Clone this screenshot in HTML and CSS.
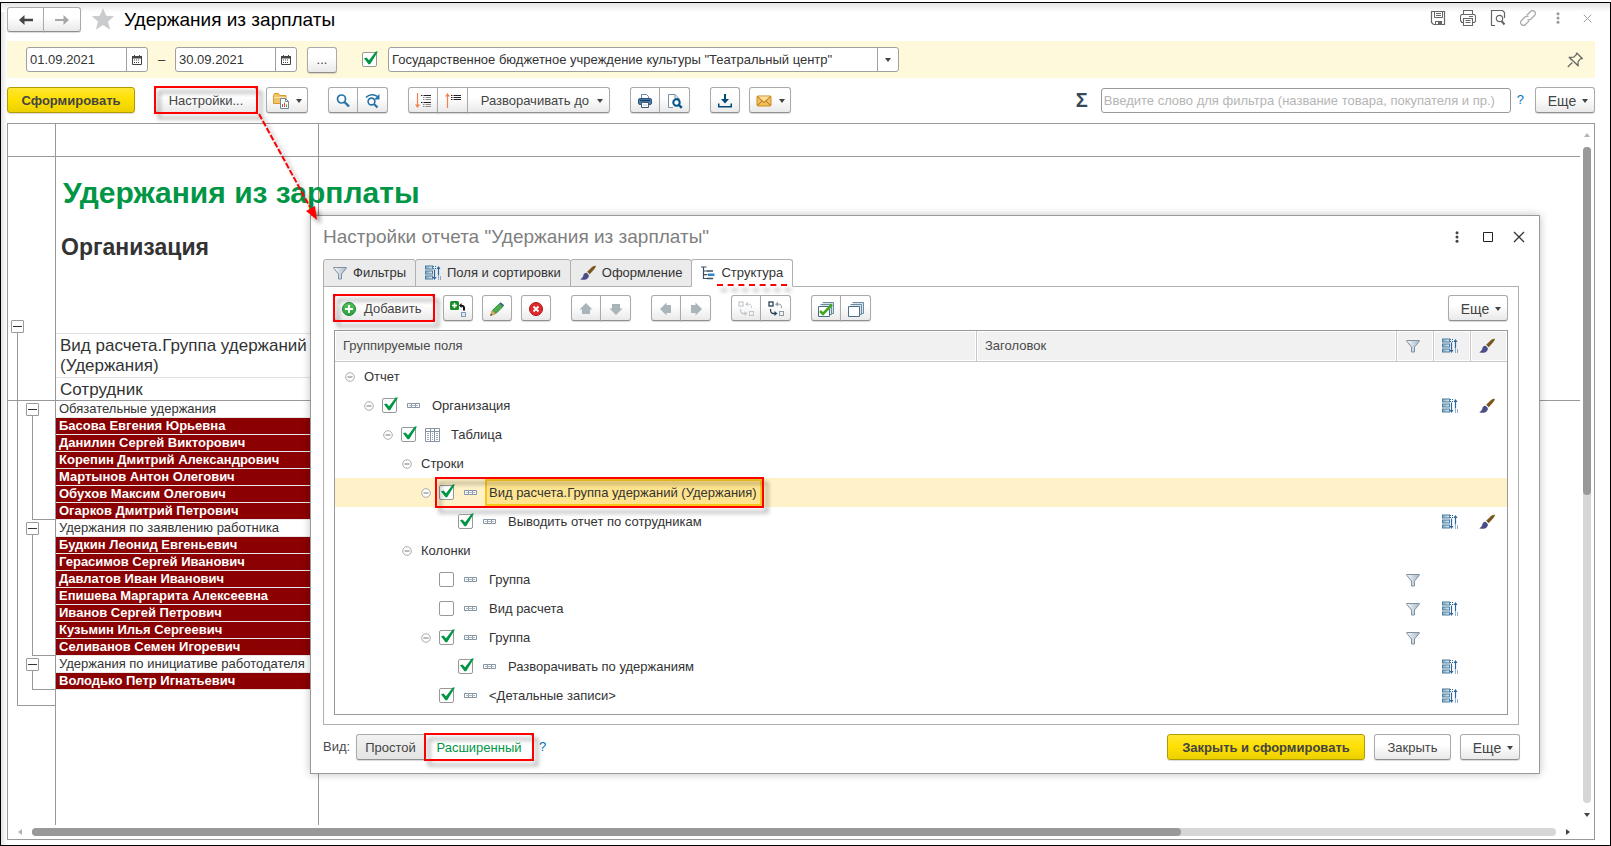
FILE: index.html
```html
<!DOCTYPE html>
<html lang="ru">
<head>
<meta charset="utf-8">
<title>Удержания из зарплаты</title>
<link rel="stylesheet" href="styles.css">
</head>
<body>
<svg class="sprite" aria-hidden="true">
  <defs>
    <linearGradient id="g-funnel" x1="0" x2="1" y1="0" y2="0"><stop offset="0" stop-color="#f4f7fa"/><stop offset="1" stop-color="#a9b9c8"/></linearGradient>
    <linearGradient id="g-bar" x1="0" x2="1" y1="0" y2="0"><stop offset="0" stop-color="#7fa9c4"/><stop offset="1" stop-color="#e2eef6"/></linearGradient>
    <linearGradient id="g-green" x1="0" x2="0" y1="0" y2="1"><stop offset="0" stop-color="#5cc35c"/><stop offset="1" stop-color="#27a33a"/></linearGradient>
    <symbol id="back" viewBox="0 0 16 16"><path d="M1 8l5.500-5v3.800H15v2.400H6.500V13z" fill="#444"/></symbol>
    <symbol id="fwd" viewBox="0 0 16 16"><path d="M15 8L9.500 3v4H1v2h8.500v4z" fill="#a8a8a8"/></symbol>
    <symbol id="star" viewBox="0 0 24 24"><path d="M12 1l3.200 7.800 8 .5-6.200 5.200 2.200 8.200L12 18l-7.200 4.700L7 14.500.8 9.300l8-.5z" fill="#c9cbce"/></symbol>
    <symbol id="cal" viewBox="0 0 10 10"><path d="M.5 2h9v7.500h-9z" fill="#fff" stroke="#444"/><path d="M0 1h10v2.500H0zM2 0h1v2H2zM7 0h1v2H7z" fill="#444"/><path d="M2 5h6M2 7.500h6" stroke="#444" stroke-dasharray="1 1"/></symbol>
    <symbol id="caret" viewBox="0 0 6 4"><path d="M0 0h6L3 4z" fill="#444"/></symbol>
    <symbol id="folder" viewBox="0 0 16 16"><path d="M.5 2.500l1-2h4l1 2H13v8H.5z" fill="#f2c468" stroke="#d99a2c"/><path d="M1 4.500h11.500" stroke="#fbe5b4"/><path d="M7.500 5.500h5l3 3v7h-8z" fill="#fff" stroke="#6d8799"/><path d="M12.500 5.500v3h3" fill="none" stroke="#6d8799"/><path d="M9.500 14v-3M11.500 14V9.500" stroke="#e0483a"/><path d="M13.500 14v-2.500" stroke="#3aa049"/></symbol>
    <symbol id="find" viewBox="0 0 16 16"><circle cx="6.500" cy="6" r="4" fill="none" stroke="#2672a8" stroke-width="1.700"/><path d="M9.500 9l4.500 4.500" stroke="#2672a8" stroke-width="2.400"/></symbol>
    <symbol id="refind" viewBox="0 0 16 16"><circle cx="6.500" cy="8.500" r="3.400" fill="none" stroke="#2672a8" stroke-width="1.600"/><path d="M9 11l3.500 3.500" stroke="#2672a8" stroke-width="2.200"/><path d="M1 4.500C4 1 9 .8 12.500 3.500" fill="none" stroke="#2672a8" stroke-width="1.500"/><path d="M14.500 1v5.500H9z" fill="#2672a8"/></symbol>
    <symbol id="expand" viewBox="0 0 16 16"><path d="M2.500 0v13" stroke="#f0824a" stroke-width="1.200"/><path d="M0 11.500h5L2.500 15z" fill="#f0824a"/><path d="M6 2.500h1.500M6 9.500h1.500M8.500 2.500H16M8.500 9.500H16" stroke="#222"/><path d="M8 4.500h1.500M10.500 4.500H16M8 6.500h1.500M10.500 6.500H16M8 11.500h1.500M10.500 11.500H16M8 13.500h1.500M10.500 13.500H16" stroke="#8a8a8a"/></symbol>
    <symbol id="collapse" viewBox="0 0 16 16"><path d="M2.500 2v13" stroke="#f0824a" stroke-width="1.200"/><path d="M0 3.500h5L2.500 0z" fill="#f0824a"/><path d="M6 2.500h1.500M6 4.500h1.500M6 6.500h1.500M8.500 2.500H16M8.500 4.500H16M8.500 6.500H16" stroke="#222"/></symbol>
    <symbol id="print" viewBox="0 0 16 16"><path d="M4.500 6V1.500h5l2 2V6" fill="#fff" stroke="#6f8aa5"/><rect x="1.500" y="5.500" width="13" height="6" rx="1.500" fill="#4c7fae" stroke="#2b5580"/><path d="M3 7.500h10" stroke="#1f3f60" stroke-width="1.400"/><path d="M4.500 9.500h7v5h-7z" fill="#fff" stroke="#3f5c78"/><path d="M6 12h4" stroke="#b8c6d2"/></symbol>
    <symbol id="preview" viewBox="0 0 16 16"><path d="M6 14.500H1.500V1.500h6.500l4 4V7" fill="#fff" stroke="#7a8fa2"/><path d="M8 1.500v4h4" fill="none" stroke="#7a8fa2"/><circle cx="9.500" cy="9.500" r="3.200" fill="#fff" stroke="#00538a" stroke-width="2"/><path d="M12 12l2.800 2.800" stroke="#00538a" stroke-width="2.400"/></symbol>
    <symbol id="save" viewBox="0 0 16 16"><path d="M7 1h2v5h3L8 10.500 4 6h3zM1 10.500h1.500V13h11v-2.500H15v4H1z" fill="#00497a"/></symbol>
    <symbol id="mail" viewBox="0 0 16 16"><rect x="1" y="3" width="14" height="10" rx="1" fill="#f2bd5c" stroke="#c98a22"/><path d="M1.500 3.500L8 9.500l6.500-6M1.500 12.500l4.700-4.600M14.500 12.500L9.800 7.900" fill="none" stroke="#b27415"/><path d="M2.500 3.500h11L8 8.400z" fill="#fbdf9f"/></symbol>
    <symbol id="floppy" viewBox="0 0 16 16"><path d="M1.500 1.500h13v13h-11l-2-2z" fill="none" stroke="#666" stroke-width="1.200"/><path d="M4.500 1.500v6h8v-6M6 3.500h5M6 5.500h5" fill="none" stroke="#666"/><path d="M5 11h7v3.500H5z" fill="#666"/><path d="M6 12h2v2H6z" fill="#fff"/></symbol>
    <symbol id="printer-o" viewBox="0 0 16 16"><path d="M3.500 4V.5h9V4M3 12.500H1.500v-1L.5 11V6l1-1.500h13l1 1.500v5l-1 1.500H13M3.500 8.500h9v7h-9zM5.500 10.500h5M5.500 12.500h5M9 6.500h4" fill="none" stroke="#666" stroke-width="1.100"/></symbol>
    <symbol id="page-find" viewBox="0 0 16 16"><path d="M5 15.500H1.500V.5h11l2 2V8" fill="none" stroke="#666" stroke-width="1.200"/><circle cx="9.500" cy="8.500" r="3.200" fill="none" stroke="#666" stroke-width="1.200"/><path d="M11.500 11l3 3.500" stroke="#666" stroke-width="2"/></symbol>
    <symbol id="link" viewBox="0 0 16 16"><path d="M7 5l3.500-3.500a2.800 2.800 0 014 4L11 9a2.800 2.800 0 01-3.500.4M9 11l-3.500 3.500a2.800 2.800 0 01-4-4L5 7a2.800 2.800 0 013.500-.4" fill="none" stroke="#a8a8a8" stroke-width="1.200"/></symbol>
    <symbol id="dots" viewBox="0 0 4 12"><circle cx="2" cy="1.800" r="1.500"/><circle cx="2" cy="6" r="1.500"/><circle cx="2" cy="10.200" r="1.500"/></symbol>
    <symbol id="x" viewBox="0 0 12 12"><path d="M1 1l10 10M11 1L1 11" stroke="currentColor" stroke-width="1.300"/></symbol>
    <symbol id="square" viewBox="0 0 10 10"><path d="M.5.5h9v9h-9z" fill="none" stroke="#222"/></symbol>
    <symbol id="pin" viewBox="0 0 16 16"><path d="M9.500.8l5.800 5.700-1.800.3-2.300 2.500-.2 4.200-2.600-2.600M4.500 8L2.400 5.500l4.300-.4L9.300 2.600 9.500.8M2 5l9.500 9.300M5.300 10.500L.8 15" fill="none" stroke="#666" stroke-width="1.200"/></symbol>
    <symbol id="funnel" viewBox="0 0 14 14"><path d="M.7 1.500h12.600v.8L8.500 8v5H5.500V8L.7 2.300z" fill="url(#g-funnel)" stroke="#7f909f"/></symbol>
    <symbol id="fields" viewBox="0 0 16 15"><g fill="url(#g-bar)" stroke="#4d7f9f"><rect x=".5" y=".5" width="7" height="3"/><rect x=".5" y="5.500" width="7" height="3"/><rect x=".5" y="10.500" width="7" height="3"/></g><path d="M9.500 4v8" stroke="#2e67a0" stroke-width="1.200"/><path d="M7.500 11.500h4l-2 3z" fill="#2e67a0"/><path d="M8 1h3M8 3h3" stroke="#2e67a0" stroke-dasharray="1 1"/><path d="M13.500 2v8" stroke="#2e67a0" stroke-width="1.200"/><path d="M11.500 3.500h4l-2-3z" fill="#2e67a0"/><path d="M13 11.500h3M13 13.500h3" stroke="#2e67a0" stroke-dasharray="1 1"/></symbol>
    <symbol id="brush" viewBox="0 0 16 15"><path d="M15.800.2c-1.600-.3-3 .6-4.800 2.300L7.200 6.300l2.500 2.400 3.800-4.200C15 2.800 15.900 1.500 15.800.2z" fill="#7b551c"/><path d="M6.600 7.200c-1.600-.2-2.900.8-3.200 2.500-.3 1.800-1.300 3-3.200 4 3 1 6 .6 7.600-1 1.100-1.200 1.300-2.400.8-3.500z" fill="#4b4e86"/></symbol>
    <symbol id="tree" viewBox="0 0 14 14"><path d="M0 1h5.500M2.500 1v11.500h4M2.500 5h4M2.500 8.700h4" fill="none" stroke="#3d4f5c" stroke-width="1.200"/><path d="M6 5h6M6 12.500h6" stroke="#3d4f5c" stroke-width="1.400"/><path d="M7 7.500h6.500v2.500H7z" fill="#2f86c8"/></symbol>
    <symbol id="plus" viewBox="0 0 16 16"><circle cx="8" cy="8" r="6.500" fill="url(#g-green)" stroke="#178a35"/><path d="M8 4v8M4 8h8" stroke="#fff" stroke-width="2"/></symbol>
    <symbol id="addchild" viewBox="0 0 16 16"><rect x="0" y="0" width="9" height="9" rx="1.500" fill="#1c8f2c"/><path d="M4.500 2v5M2 4.500h5" stroke="#fff" stroke-width="1.600"/><path d="M9 4.500L11.500 2v1.700C14 3.700 15 5 15 7v2.500h-2V7c0-1-.5-1.300-1.500-1.300V7z" fill="#111"/><rect x="11.500" y="11.500" width="4" height="4" fill="#dce7f2" stroke="#7f9bb8"/></symbol>
    <symbol id="pencil" viewBox="0 0 16 16"><path d="M10.500 2.500l3.500 3-7 7-3.500-3.200z" fill="#46ae4c" stroke="#2c7b38" stroke-width=".8"/><path d="M10.500 2.500l1.200-1.200 3.500 3L14 5.500z" fill="#35609a"/><path d="M3 9.500L1.500 14.500l5-1.800z" fill="#e8b45e" stroke="#a3762e" stroke-width=".6"/><path d="M2 12.800l-.7 2 2.100-.8z" fill="#333"/></symbol>
    <symbol id="delete" viewBox="0 0 16 16"><circle cx="8" cy="8" r="6.500" fill="#dd2a2f" stroke="#ad1318"/><path d="M5.500 5.500l5 5M10.500 5.500l-5 5" stroke="#fff" stroke-width="1.800"/></symbol>
    <symbol id="arrow" viewBox="0 0 16 16"><path d="M8 2l6.500 6.500H12V13H4V8.500H1.500z" fill="#a9b4bb"/></symbol>
    <symbol id="swap" viewBox="0 0 16 16"><rect x="1" y="1" width="4" height="4" fill="none" stroke-width="1.300"/><path d="M8.500 3.200H11c2 0 2.500 1 2.500 4" fill="none" stroke="#8f9aa3"/><path d="M10 .8v4.800L7 3.200z" fill="#8f9aa3" stroke="none"/><path d="M2.500 8c0 3.500.8 4.500 2.500 4.500h2" fill="none" stroke-width="1.300"/><path d="M6.500 10v5l3-2.500z" stroke="none"/><rect x="11.500" y="10.500" width="4" height="4" fill="none" stroke="#8f9aa3"/></symbol>
    <symbol id="stack" viewBox="0 0 16 16"><path d="M4.500 1.500h11v11h-2M2.500 3.500h11v10h-2" fill="#d6e3ec" stroke="#6d8da3"/><path d="M.5 5.500h11v10H.5z" fill="#fff" stroke="#4b6f8b"/></symbol>
    <symbol id="stack-on" viewBox="0 0 16 16"><use href="#stack"/><path d="M2 10l3 3 9-9.500" fill="none" stroke="#43a81d" stroke-width="2.600"/></symbol>
    <symbol id="minus" viewBox="0 0 10 10"><circle cx="5" cy="5" r="4.300" fill="#fff" stroke="#a3a3a3" stroke-width=".9"/><path d="M2.500 5h5" stroke="#777"/></symbol>
    <symbol id="item" viewBox="0 0 14 6"><path d="M.5.5h4v4h-4zM4.500.5h4v4h-4zM8.500.5h4v4h-4z" fill="#fff" stroke="#8796a5"/><path d="M2 2.500h9" stroke="#a9b4bf"/></symbol>
    <symbol id="table" viewBox="0 0 16 14"><path d="M.5.500h14v13H.5zM.5 3.500h14M5.500.5v13M9.500.5v13" fill="#fff" stroke="#8694a3"/><path d="M2 5.500h2M7 5.500h1M11 5.500h2M2 7.500h2M7 7.500h1M11 7.500h2M2 9.500h2M7 9.500h1M11 9.500h2M2 11.500h2M7 11.500h1M11 11.500h2" stroke="#9aa7b4"/></symbol>
  </defs>
</svg>

<div class="window">
  <header class="titlebar">
    <div class="group">
      <button class="btn nav" aria-label="Назад"><svg class="i16"><use href="#back"/></svg></button>
      <button class="btn nav" aria-label="Вперед"><svg class="i16"><use href="#fwd"/></svg></button>
    </div>
    <svg class="star"><use href="#star"/></svg>
    <h1>Удержания из зарплаты</h1>
    <div class="window-tools">
      <svg class="i16"><use href="#floppy"/></svg>
      <svg class="i16"><use href="#printer-o"/></svg>
      <svg class="i16"><use href="#page-find"/></svg>
      <svg class="i16"><use href="#link"/></svg>
      <svg class="i16 dots"><use href="#dots"/></svg>
      <svg class="cross"><use href="#x"/></svg>
    </div>
  </header>

  <div class="filters">
    <div class="field date"><input type="text" value="01.09.2021" aria-label="Начало периода"><button aria-label="Календарь"><svg class="i10"><use href="#cal"/></svg></button></div>
    <span class="dash">–</span>
    <div class="field date"><input type="text" value="30.09.2021" aria-label="Конец периода"><button aria-label="Календарь"><svg class="i10"><use href="#cal"/></svg></button></div>
    <button class="btn icon period">...</button>
    <input type="checkbox" class="check" checked aria-label="Отбор по организации">
    <div class="field org"><input type="text" value="Государственное бюджетное учреждение культуры &quot;Театральный центр&quot;" aria-label="Организация"><button aria-label="Выбрать"><svg class="caret"><use href="#caret"/></svg></button></div>
    <svg class="i16 pin"><use href="#pin"/></svg>
  </div>

  <div class="toolbar">
    <button class="btn primary generate">Сформировать</button>
    <div class="cluster">
      <span class="mark"><button class="btn settings">Настройки...</button></span>
      <button class="btn menu" aria-label="Варианты"><svg class="i16"><use href="#folder"/></svg><svg class="caret"><use href="#caret"/></svg></button>
    </div>
    <div class="group">
      <button class="btn icon" aria-label="Найти"><svg class="i16"><use href="#find"/></svg></button>
      <button class="btn icon" aria-label="Найти далее"><svg class="i16"><use href="#refind"/></svg></button>
    </div>
    <div class="group">
      <button class="btn icon" aria-label="Развернуть"><svg class="i16"><use href="#expand"/></svg></button>
      <button class="btn icon" aria-label="Свернуть"><svg class="i16"><use href="#collapse"/></svg></button>
      <button class="btn unfold">Разворачивать до<svg class="caret"><use href="#caret"/></svg></button>
    </div>
    <div class="group">
      <button class="btn icon" aria-label="Печать"><svg class="i16"><use href="#print"/></svg></button>
      <button class="btn icon" aria-label="Просмотр"><svg class="i16"><use href="#preview"/></svg></button>
    </div>
    <div class="cluster">
      <button class="btn icon" aria-label="Сохранить"><svg class="i16"><use href="#save"/></svg></button>
      <button class="btn menu" aria-label="Отправить"><svg class="i16"><use href="#mail"/></svg><svg class="caret"><use href="#caret"/></svg></button>
    </div>
    <div class="search">
      <span class="sigma">Σ</span>
      <input type="text" class="filter-text" placeholder="Введите слово для фильтра (название товара, покупателя и пр.)" aria-label="Фильтр">
      <a class="help" href="#">?</a>
      <button class="btn more">Еще<svg class="caret"><use href="#caret"/></svg></button>
    </div>
  </div>

  <main class="report">
    <div class="sheet">
      <div class="band"></div>
      <div class="grouped">
        <div class="outline-root"><button class="fold" aria-label="Свернуть все"></button></div>
        <div class="heading">
          <h2>Удержания из зарплаты</h2>
          <h3>Организация</h3>
          <p>Вид расчета.Группа удержаний (Удержания)</p>
          <p>Сотрудник</p>
        </div>
        <section class="block">
          <div class="outline"><button class="fold" aria-label="Свернуть"></button></div>
          <ul><li class="kind">Обязательные удержания</li><li>Басова Евгения Юрьевна</li><li>Данилин Сергей Викторович</li><li>Корепин Дмитрий Александрович</li><li>Мартынов Антон Олегович</li><li>Обухов Максим Олегович</li><li>Огарков Дмитрий Петрович</li></ul>
        </section>
        <section class="block">
          <div class="outline"><button class="fold" aria-label="Свернуть"></button></div>
          <ul><li class="kind">Удержания по заявлению работника</li><li>Будкин Леонид Евгеньевич</li><li>Герасимов Сергей Иванович</li><li>Давлатов Иван Иванович</li><li>Епишева Маргарита Алексеевна</li><li>Иванов Сергей Петрович</li><li>Кузьмин Илья Сергеевич</li><li>Селиванов Семен Игоревич</li></ul>
        </section>
        <section class="block">
          <div class="outline"><button class="fold" aria-label="Свернуть"></button></div>
          <ul><li class="kind">Удержания по инициативе работодателя</li><li>Володько Петр Игнатьевич</li></ul>
        </section>
      </div>
    </div>
    <div class="vscroll"><svg class="caret up"><use href="#caret"/></svg><div class="track"><div class="thumb"></div></div><svg class="caret"><use href="#caret"/></svg></div>
    <div class="hscroll"><svg class="caret left"><use href="#caret"/></svg><div class="track"><div class="thumb"></div></div><svg class="caret right"><use href="#caret"/></svg></div>
  </main>
</div>

<div class="dialog" role="dialog" aria-labelledby="dlg-title">
  <div class="dialog-head">
    <h2 id="dlg-title">Настройки отчета "Удержания из зарплаты"</h2>
    <div class="dialog-tools">
      <svg class="dots"><use href="#dots"/></svg>
      <svg class="i10"><use href="#square"/></svg>
      <svg class="cross"><use href="#x"/></svg>
    </div>
  </div>
  <div class="tabs" role="tablist">
    <button class="tab" role="tab"><svg class="i14"><use href="#funnel"/></svg>Фильтры</button>
    <button class="tab" role="tab"><svg class="i16"><use href="#fields"/></svg>Поля и сортировки</button>
    <button class="tab" role="tab"><svg class="i16"><use href="#brush"/></svg>Оформление</button>
    <button class="tab active" role="tab" aria-selected="true"><svg class="i14"><use href="#tree"/></svg><span class="underlined">Структура</span></button>
  </div>
  <div class="panel">
    <div class="toolbar panel-tools">
      <div class="cluster">
        <span class="mark"><button class="btn add"><svg class="i16"><use href="#plus"/></svg>Добавить</button></span>
        <button class="btn icon" aria-label="Добавить вложенную"><svg class="i16"><use href="#addchild"/></svg></button>
        <button class="btn icon" aria-label="Изменить"><svg class="i16"><use href="#pencil"/></svg></button>
        <button class="btn icon" aria-label="Удалить"><svg class="i16"><use href="#delete"/></svg></button>
      </div>
      <div class="group">
        <button class="btn icon" aria-label="Вверх"><svg class="i16"><use href="#arrow"/></svg></button>
        <button class="btn icon" aria-label="Вниз"><svg class="i16 turn-down"><use href="#arrow"/></svg></button>
      </div>
      <div class="group">
        <button class="btn icon" aria-label="Влево"><svg class="i16 turn-left"><use href="#arrow"/></svg></button>
        <button class="btn icon" aria-label="Вправо"><svg class="i16 turn-right"><use href="#arrow"/></svg></button>
      </div>
      <div class="group">
        <button class="btn icon" aria-label="Разгруппировать"><svg class="i16 pale"><use href="#swap"/></svg></button>
        <button class="btn icon" aria-label="Сгруппировать"><svg class="i16 deep"><use href="#swap"/></svg></button>
      </div>
      <div class="group">
        <button class="btn icon" aria-label="Отметить все"><svg class="i16"><use href="#stack-on"/></svg></button>
        <button class="btn icon" aria-label="Снять отметки"><svg class="i16"><use href="#stack"/></svg></button>
      </div>
      <button class="btn more push">Еще<svg class="caret"><use href="#caret"/></svg></button>
    </div>
    <table class="structure">
      <colgroup><col class="c-field"><col class="c-title"><col class="c-icon"><col class="c-icon"><col class="c-icon"></colgroup>
      <thead>
        <tr><th>Группируемые поля</th><th>Заголовок</th><th class="ic"><svg class="i14"><use href="#funnel"/></svg></th><th class="ic"><svg class="i16"><use href="#fields"/></svg></th><th class="ic"><svg class="i16"><use href="#brush"/></svg></th></tr>
      </thead>
      <tbody>
        <tr><td><div class="node l0"><svg class="i10"><use href="#minus"/></svg>Отчет</div></td><td></td><td></td><td></td><td></td></tr>
        <tr><td><div class="node l1"><svg class="i10"><use href="#minus"/></svg><label><input type="checkbox" class="check" checked><svg class="kind-icon"><use href="#item"/></svg>Организация</label></div></td><td></td><td></td><td class="ic"><svg class="i16"><use href="#fields"/></svg></td><td class="ic"><svg class="i16"><use href="#brush"/></svg></td></tr>
        <tr><td><div class="node l2"><svg class="i10"><use href="#minus"/></svg><label><input type="checkbox" class="check" checked><svg class="kind-icon wide"><use href="#table"/></svg>Таблица</label></div></td><td></td><td></td><td></td><td></td></tr>
        <tr><td><div class="node l3"><svg class="i10"><use href="#minus"/></svg>Строки</div></td><td></td><td></td><td></td><td></td></tr>
        <tr class="selected"><td><div class="node l4"><svg class="i10"><use href="#minus"/></svg><label class="mark row-mark"><input type="checkbox" class="check" checked><svg class="kind-icon"><use href="#item"/></svg><span class="cell">Вид расчета.Группа удержаний (Удержания)</span></label></div></td><td></td><td></td><td></td><td></td></tr>
        <tr><td><div class="node l5"><span class="i10"></span><label><input type="checkbox" class="check" checked><svg class="kind-icon"><use href="#item"/></svg>Выводить отчет по сотрудникам</label></div></td><td></td><td></td><td class="ic"><svg class="i16"><use href="#fields"/></svg></td><td class="ic"><svg class="i16"><use href="#brush"/></svg></td></tr>
        <tr><td><div class="node l3"><svg class="i10"><use href="#minus"/></svg>Колонки</div></td><td></td><td></td><td></td><td></td></tr>
        <tr><td><div class="node l4"><span class="i10"></span><label><input type="checkbox" class="check"><svg class="kind-icon"><use href="#item"/></svg>Группа</label></div></td><td></td><td class="ic"><svg class="i14"><use href="#funnel"/></svg></td><td></td><td></td></tr>
        <tr><td><div class="node l4"><span class="i10"></span><label><input type="checkbox" class="check"><svg class="kind-icon"><use href="#item"/></svg>Вид расчета</label></div></td><td></td><td class="ic"><svg class="i14"><use href="#funnel"/></svg></td><td class="ic"><svg class="i16"><use href="#fields"/></svg></td><td></td></tr>
        <tr><td><div class="node l4"><svg class="i10"><use href="#minus"/></svg><label><input type="checkbox" class="check" checked><svg class="kind-icon"><use href="#item"/></svg>Группа</label></div></td><td></td><td class="ic"><svg class="i14"><use href="#funnel"/></svg></td><td></td><td></td></tr>
        <tr><td><div class="node l5"><span class="i10"></span><label><input type="checkbox" class="check" checked><svg class="kind-icon"><use href="#item"/></svg>Разворачивать по удержаниям</label></div></td><td></td><td></td><td class="ic"><svg class="i16"><use href="#fields"/></svg></td><td></td></tr>
        <tr><td><div class="node l4"><span class="i10"></span><label><input type="checkbox" class="check" checked><svg class="kind-icon"><use href="#item"/></svg>&lt;Детальные записи&gt;</label></div></td><td></td><td></td><td class="ic"><svg class="i16"><use href="#fields"/></svg></td><td></td></tr>
      </tbody>
    </table>
  </div>
  <div class="dialog-foot">
    <span class="view-label">Вид:</span>
    <div class="views"><button class="btn simple">Простой</button><span class="mark"><button class="btn advanced">Расширенный</button></span></div>
    <a class="help" href="#">?</a>
    <div class="cluster push">
      <button class="btn primary apply">Закрыть и сформировать</button>
      <button class="btn close">Закрыть</button>
      <button class="btn more">Еще<svg class="caret"><use href="#caret"/></svg></button>
    </div>
  </div>
</div>

<svg class="pointer" viewBox="0 0 70 120" aria-hidden="true"><path d="M4 3L55 96" stroke="#f00" stroke-width="2" stroke-dasharray="6 2" fill="none"/><path d="M62 109l-11-9 9-5z" fill="#f00"/></svg>
</body>
</html>
```
FILE: styles.css
```css
* { box-sizing: border-box; }

body {
  margin: 0;
  padding-top: 2px;
  min-height: 100vh;
  display: flex;
  background: #fff;
  color: #333;
  font: 13px/16px "Liberation Sans", Arial, sans-serif;
}

button, input { font: inherit; color: inherit; margin: 0; }
h1, h2, h3, p, ul { margin: 0; padding: 0; font-weight: normal; }
ul { list-style: none; }
svg { display: block; flex: none; }

.sprite { position: absolute; width: 0; height: 0; }
.i10 { width: 10px; height: 10px; flex: none; }
.i14 { width: 14px; height: 14px; }
.i16 { width: 16px; height: 16px; }
.caret { width: 6px; height: 4px; }
.cross { width: 12px; height: 12px; }

.window {
  flex: 1;
  min-width: 0;
  display: flex;
  flex-direction: column;
  border: 1px solid #000;
  padding: 0 15px 5px 6px;
  background:
    linear-gradient(#e4e4e4, #fff) 0 0 / 100% 9px no-repeat,
    linear-gradient(90deg, #e4e4e4, #fff) 0 0 / 6px 100% no-repeat;
}

/* Buttons and fields */
.btn {
  height: 26px;
  padding: 1px 0 0;
  display: flex;
  align-items: center;
  justify-content: center;
  border: 1px solid #aaa;
  border-bottom-color: #8f8f8f;
  border-radius: 3px;
  background: linear-gradient(#fff 40%, #e9e9e9);
  box-shadow: 0 1px 1px rgba(0, 0, 0, .15);
  color: #444;
  white-space: nowrap;
}
.btn.icon { width: 30px; }
.btn.nav { width: 37px; height: 25px; }
.btn.nav + .btn.nav { width: 38px; }
.btn.menu { width: 42px; gap: 7px; }
.btn.more { width: 60px; padding-left: 6px; gap: 6px; font-size: 14px; }
.btn.primary {
  border-color: #b09c00;
  background: linear-gradient(#ffe632, #fde000 50%, #ecd000);
  font-weight: bold;
}
.generate { width: 128px; }
.settings { width: 102px; }
.btn.unfold { width: 143px; padding-right: 6px; justify-content: flex-end; gap: 8px; }
.group { display: flex; }
.group .btn + .btn { margin-left: -1px; border-radius: 0 3px 3px 0; }
.group .btn.icon + .btn.icon { width: 31px; }
.group .btn:first-child { border-radius: 3px 0 0 3px; }
.group .btn:not(:first-child):not(:last-child) { border-radius: 0; }
.cluster { display: flex; gap: 9px; }
.push { margin-left: auto; }

.field {
  height: 25px;
  display: flex;
  border: 1px solid #a0a0a0;
  border-radius: 3px;
  background: #fff;
  overflow: hidden;
}
.field input { flex: 1; min-width: 0; padding: 0 3px; border: 0; outline: 0; background: none; }
.field button {
  width: 21px;
  padding: 0;
  display: flex;
  align-items: center;
  justify-content: center;
  border: 0;
  border-left: 1px solid #a0a0a0;
  background: none;
}
.field.date { width: 122px; }
.field.org { width: 511px; }

.check {
  appearance: none;
  position: relative;
  width: 15px;
  height: 15px;
  flex: none;
  border: 1px solid #999;
  border-radius: 2px;
  background: #fff;
}
.check:checked::after {
  content: "";
  position: absolute;
  left: 1px;
  top: -2px;
  width: 14px;
  height: 14px;
  background: #009646;
  clip-path: polygon(0 52%, 18% 46%, 36% 66%, 84% 4%, 100% 4%, 44% 94%, 32% 94%);
}

/* Red frame around a highlighted control */
.mark { position: relative; display: flex; }
.mark::after {
  content: "";
  position: absolute;
  inset: -1px;
  border: 2px solid #f00;
  filter: drop-shadow(4px 5px 2px rgba(0, 0, 0, .4));
  pointer-events: none;
}

.titlebar { display: flex; align-items: flex-start; height: 38px; padding-top: 4px; }
.star { width: 24px; height: 24px; margin: 0 9px 0 10px; }
h1 { font-size: 19px; line-height: 25px; color: #000; }
.window-tools { margin: 3px 0 0 auto; display: flex; align-items: center; gap: 14px; color: #999; }
.window-tools .dots { height: 12px; fill: #999; }
.window-tools .cross { width: 9px; height: 9px; margin: 0 3px; }

.filters { display: flex; align-items: center; height: 37px; padding: 0 12px 0 19px; background: #fff9db; }
.dash { width: 27px; text-align: center; }
.period { margin: 0 25px 0 10px; }
.filters .check { margin-right: 11px; }
.pin { margin-left: auto; }

.toolbar { display: flex; align-items: center; gap: 20px; }
.window > .toolbar { padding: 9px 0 10px; }
.search { flex: 1; display: flex; align-items: center; justify-content: flex-end; }
.sigma { margin-right: 13px; font-size: 20px; line-height: 24px; font-weight: bold; color: #34495a; }
.filter-text { width: 410px; height: 25px; padding: 0 2px; border: 1px solid #999; border-radius: 3px; outline: 0; }
.filter-text::placeholder { color: #b5b5b5; opacity: 1; }
.help { margin: 0 11px 0 6px; color: #0071bc; text-decoration: none; }

/* Report */
.report {
  flex: 1;
  display: grid;
  grid-template-columns: minmax(0, 1fr) 14px;
  grid-template-rows: 1fr 14px;
  border: 1px solid #999;
}
.sheet {
  background:
    linear-gradient(#999, #999) 47px 0 / 1px 100% no-repeat,
    linear-gradient(#999, #999) 310px 0 / 1px 100% no-repeat;
}
.band { height: 33px; border-bottom: 1px solid #999; }
.grouped { position: relative; padding-bottom: 16px; }
.outline-root {
  position: absolute;
  left: 9px;
  top: 169px;
  bottom: 0;
  width: 38px;
  border: solid #999;
  border-width: 0 0 1px 1px;
}
.fold {
  display: block;
  width: 13px;
  height: 13px;
  padding: 0;
  border: 1px solid #999;
  border-radius: 1px;
  background: linear-gradient(#333, #333) center / 9px 1px no-repeat #fff;
}
.outline-root .fold { margin: -6px 0 0 -7px; }
.heading { padding-left: 48px; border-bottom: 1px solid #999; }
.heading > * { width: 262px; }
.heading h2 { padding: 18px 0 0 7px; font-size: 30px; line-height: 36px; font-weight: bold; color: #009646; white-space: nowrap; }
.heading h3 { height: 122px; padding: 22px 0 0 5px; font-size: 23px; line-height: 28px; font-weight: bold; }
.heading p { padding: 2px 0 1px 4px; border-top: 1px solid #e2e2e2; font-size: 17px; line-height: 20px; }
.heading p:last-child { padding: 2px 0 0 4px; }
.block { display: flex; padding-left: 24px; }
.outline { width: 23px; margin: 8px 1px 0 0; border: solid #999; border-width: 0 0 1px 1px; }
.outline .fold { margin: -6px 0 0 -7px; }
.block ul { width: 262px; }
.block li { height: 17px; padding-left: 3px; border-bottom: 1px solid #e8e8e8; background: #8b0000; color: #fff; font-weight: bold; white-space: nowrap; }
.block .kind { background: #fff; color: #333; font-weight: normal; }

.vscroll { display: flex; flex-direction: column; align-items: center; padding: 9px 0 8px; gap: 10px; }
.hscroll { display: flex; align-items: center; padding: 0 9px; gap: 9px; }
.track { flex: 1; border-radius: 4px; background: #d6d6d6; }
.thumb { border-radius: 4px; background: #999; }
.vscroll .track { width: 8px; }
.vscroll .thumb { height: 53%; }
.hscroll .track { height: 8px; }
.hscroll .thumb { width: 75.4%; height: 8px; }
.up { transform: rotate(180deg); opacity: .4; }
.left { transform: rotate(90deg); opacity: .4; }
.right { transform: rotate(-90deg); }

/* Settings dialog */
.dialog {
  position: absolute;
  left: 310px;
  right: 71px;
  top: 215px;
  padding: 0 20px 13px 12px;
  border: 1px solid #999;
  background: #fff;
  box-shadow: 0 0 8px rgba(0, 0, 0, .25);
}
.dialog-head { display: flex; align-items: center; height: 43px; padding-bottom: 2px; }
.dialog-head h2 { font-size: 19px; line-height: 24px; color: #7f7f7f; }
.dialog-tools { margin-left: auto; margin-right: -6px; display: flex; align-items: center; gap: 24px; color: #333; }
.dialog-tools .dots { width: 4px; height: 12px; fill: #444; }
.dialog-tools .i10 + .cross { margin-left: -4px; }

.tabs { position: relative; display: flex; }
.tab {
  height: 28px;
  margin-right: -1px;
  margin-bottom: -1px;
  padding: 0 9px;
  display: flex;
  align-items: center;
  gap: 6px;
  border: 1px solid #b0b0b0;
  border-radius: 3px 3px 0 0;
  background: #ebebeb;
}
.tab.active { border-bottom-color: #fff; background: #fff; }
.underlined { position: relative; }
.underlined::after {
  content: "";
  position: absolute;
  left: -4px;
  right: -4px;
  bottom: -5px;
  border-top: 2px dashed #f00;
  filter: drop-shadow(4px 5px 2px rgba(0, 0, 0, .4));
}
.panel { padding: 8px 10px 9px; border: 1px solid #b0b0b0; }
.panel-tools { margin-bottom: 9px; }
.btn.add { width: 100px; padding-left: 6px; justify-content: flex-start; gap: 7px; }
.turn-down { transform: rotate(180deg); }
.turn-left { transform: rotate(-90deg); }
.turn-right { transform: rotate(90deg); }
.deep { stroke: #2b4152; fill: #2b4152; }
.pale { stroke: #8f9aa3; fill: #8f9aa3; opacity: .5; }

.structure { width: 100%; table-layout: fixed; border-collapse: separate; border-spacing: 0; border: 1px solid #999; padding-bottom: 4px; }
.c-field { width: 641px; }
.c-icon { width: 37px; }
.structure th { height: 31px; padding: 0 0 0 8px; border: solid #c8c8c8; border-width: 0 0 1px 1px; background: #f1f1f1; box-shadow: inset 0 0 0 1px #fff; font-weight: normal; text-align: left; color: #4a4a4a; }
.structure th:first-child { border-left: 0; }
.structure td { height: 29px; padding: 0; }
.structure .ic { padding: 0 4px 0 0; }
.ic svg { margin: 0 auto; }
.selected td { background: #fff2c8; }
.node { display: flex; align-items: center; gap: 9px; height: 29px; white-space: nowrap; }
.node label { display: flex; align-items: center; height: 29px; margin-left: -1px; }
.l0 { padding-left: 10px; }
.l1 { padding-left: 29px; }
.l2 { padding-left: 48px; }
.l3 { padding-left: 67px; }
.l4 { padding-left: 86px; }
.l5 { padding-left: 105px; }
.kind-icon { width: 14px; height: 6px; margin: 0 11px 0 10px; }
.kind-icon.wide { width: 16px; height: 14px; margin: 0 10px 0 9px; }
.cell { height: 27px; margin-left: -3px; padding: 0 3px 0 2px; border: 2px solid #f7c71c; background: #ffe48f; line-height: 23px; }
.row-mark::after { inset: -1px -2px -1px -4px; }
.node .row-mark .kind-icon { margin-right: 10px; }

.dialog-foot { display: flex; align-items: center; padding-top: 9px; margin-right: -1px; color: #4a4a4a; }
.view-label { width: 33px; }
.views { display: flex; }
.simple { width: 69px; border-radius: 3px 0 0 3px; background: linear-gradient(#f2f2f2, #e4e4e4); }
.advanced { width: 108px; border-radius: 0 3px 3px 0; background: #fff; color: #009646; }
.dialog-foot .help { margin-left: 6px; }
.apply { width: 198px; }
.close { width: 77px; }

.pointer { position: absolute; left: 255px; top: 111px; width: 70px; height: 120px; filter: drop-shadow(4px 4px 2px rgba(0, 0, 0, .35)); pointer-events: none; }
```
